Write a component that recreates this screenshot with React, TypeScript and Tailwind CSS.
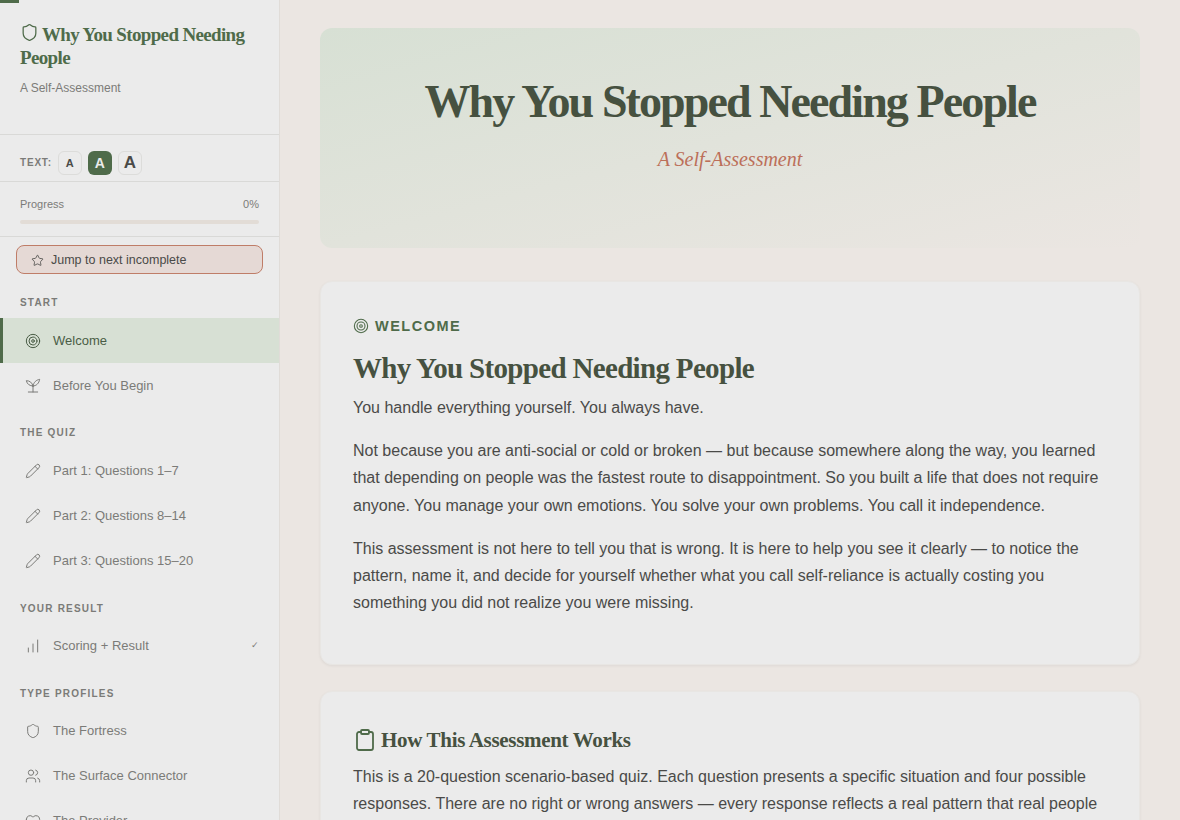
import { ChartNoAxesColumnIncreasing, Clipboard, Heart, Pencil, Shield, Star, Target, Users } from "lucide-react";
import type { ComponentType } from "react";

const sans = "font-['Liberation_Sans',Arial,sans-serif]";
const serif = "font-['Liberation_Serif','Times_New_Roman',serif]";

type IconProps = { size?: number; strokeWidth?: number; className?: string };

type NavItem = {
  label: string;
  icon: ComponentType<IconProps>;
  active?: boolean;
  done?: boolean;
};

// two-leaf seedling on a base line, lucide's sprout is too narrow for this one
function Seedling({ size = 16, strokeWidth = 1.5 }: IconProps) {
  return (
    <svg width={size} height={size} viewBox="0 0 24 24" fill="none" stroke="currentColor" strokeWidth={strokeWidth} strokeLinecap="round" strokeLinejoin="round">
      <path d="M5 21h14" />
      <path d="M12 21v-9" />
      <path d="M12 12C7 12 3 9 2 4c5 0 9 3 10 8z" />
      <path d="M12 12c5 0 9-4 10-10-5 1-9 4-10 10z" />
    </svg>
  );
}

const NAV: { title: string; titleClass: string; items: NavItem[] }[] = [
  {
    title: "Start",
    titleClass: "mb-[7px]",
    items: [
      { label: "Welcome", icon: Target, active: true },
      { label: "Before You Begin", icon: Seedling },
    ],
  },
  {
    title: "The Quiz",
    titleClass: "mb-[7px]",
    items: [
      { label: "Part 1: Questions 1–7", icon: Pencil },
      { label: "Part 2: Questions 8–14", icon: Pencil },
      { label: "Part 3: Questions 15–20", icon: Pencil },
    ],
  },
  {
    title: "Your Result",
    titleClass: "pt-px mb-[6px]",
    items: [{ label: "Scoring + Result", icon: ChartNoAxesColumnIncreasing, done: true }],
  },
  {
    title: "Type Profiles",
    titleClass: "pt-px mb-[6px]",
    items: [
      { label: "The Fortress", icon: Shield },
      { label: "The Surface Connector", icon: Users },
      { label: "The Provider", icon: Heart },
    ],
  },
];

function Sidebar() {
  return (
    <aside className="w-[280px] h-[820px] shrink-0 overflow-hidden bg-[#ebebeb] border-r border-r-[#e0dcd8] relative">
      {/* reading progress */}
      <div className="absolute left-0 top-0 h-[3px] w-[19px] bg-[#4f6b4a]" />

      <div className="h-[135px] px-5 pt-[23px] border-b border-[#d9d9d7]">
        <h1 className={`${serif} text-[19px] leading-[23px] font-bold text-[#4f6b4a] tracking-[-0.65px]`}>
          <Shield size={19} strokeWidth={1.6} className="inline-block mr-[3px] align-[-2px] relative top-[-1px]" />
          Why You Stopped Needing People
        </h1>
        <p className="mt-[11px] text-[12px] leading-[16px] text-[#7b7b78]">A Self-Assessment</p>
      </div>

      <div className="h-[47px] px-5 pt-[16px] flex items-start gap-[6px] border-b border-[#d9d9d7]">
        <span className="text-[10px] leading-6 font-bold tracking-[0.8px] text-[#7b7b78]">TEXT:</span>
        <button className="w-6 h-6 rounded-md border border-[#dcdcda] text-[11px] font-bold text-[#4a4a48] flex items-center justify-center">A</button>
        <button className="w-6 h-6 rounded-md bg-[#4f6b4a] text-[14px] font-bold text-[#ebebeb] flex items-center justify-center">A</button>
        <button className="w-6 h-6 rounded-md border border-[#dcdcda] text-[17px] font-bold text-[#4a4a48] flex items-center justify-center">A</button>
      </div>

      <div className="h-[55px] px-5 pt-[15px] border-b border-[#d9d9d7]">
        <div className="flex justify-between text-[11px] leading-[14px] text-[#7b7b78]">
          <span>Progress</span>
          <span>0%</span>
        </div>
        <div className="mt-[9px] h-1 rounded-full bg-[#e2dcd6]" />
      </div>

      <div className="px-4 pt-2">
        <button className="w-[247px] h-[29px] rounded-lg border border-[#bf7d68] bg-[#e5d9d5] pl-[14px] pt-px flex items-center gap-[7px] text-[12.5px] text-[#4a4a48]">
          <Star size={13} strokeWidth={1.5} />
          Jump to next incomplete
        </button>
      </div>

      <nav className="pt-[21px]">
        {NAV.map((group) => (
          <div key={group.title} className="mb-[17px]">
            <div className={`px-5 text-[10px] leading-[16px] font-bold uppercase tracking-[1.2px] text-[#7b7b78] ${group.titleClass}`}>{group.title}</div>
            {group.items.map((item) => {
              const Icon = item.icon;
              return (
                <div
                  key={item.label}
                  className={
                    item.active
                      ? "h-[45px] pl-[22px] pr-5 flex items-center gap-[12px] text-[13px] bg-[#d7e0d4] text-[#4a5d46] border-l-[3px] border-l-[#4f6b4a]"
                      : "h-[45px] pl-[25px] pr-5 flex items-center gap-[12px] text-[13px] text-[#7b7b78]"
                  }
                >
                  <Icon size={16} strokeWidth={1.5} />
                  <span className="flex-1">{item.label}</span>
                  {item.done && <span className="text-[9px] text-[#7b7b78]">✓</span>}
                </div>
              );
            })}
          </div>
        ))}
      </nav>
    </aside>
  );
}

export default function App() {
  return (
    <div className={`${sans} w-[1180px] h-[820px] overflow-hidden flex bg-[#ebe6e2]`}>
      <Sidebar />
      <main className="flex-1 h-[820px] overflow-hidden px-10 pt-7">
        <section className="h-[220px] rounded-xl bg-gradient-to-br from-[#d7e0d4] to-[#ebe6e2] text-center pt-[46px]">
          <h1 className={`${serif} text-[46px] leading-[56px] font-bold text-[#465140] tracking-[-1.9px]`}>Why You Stopped Needing People</h1>
          <p className={`${serif} mt-[17px] text-[20px] leading-[24px] italic text-[#bc6f59]`}>A Self-Assessment</p>
        </section>

        <section className="mt-[33px] h-[384px] rounded-xl border border-[#e8e6e3] bg-[#ebebeb] shadow-[0_1px_3px_rgba(0,0,0,0.06)] px-8 pt-[35px]">
          <div className="flex items-center gap-[6px] text-[14.5px] leading-[18px] font-bold tracking-[1.5px] text-[#4f6b4a]">
            <Target size={16} strokeWidth={1.6} />
            WELCOME
          </div>
          <h2 className={`${serif} mt-[15px] text-[29px] leading-[36px] font-bold text-[#465140] tracking-[-0.67px]`}>Why You Stopped Needing People</h2>
          <div className="mt-[8px] text-[16px] leading-[27.2px] text-[#4a4a48]">
            <p>You handle everything yourself. You always have.</p>
            <p className="mt-4">
              Not because you are anti-social or cold or broken — but because somewhere along the way, you learned that depending on people was the fastest route to disappointment. So you built a life that does not require anyone. You manage your own emotions. You solve your own problems. You call it independence.
            </p>
            <p className="mt-4">
              This assessment is not here to tell you that is wrong. It is here to help you see it clearly — to notice the pattern, name it, and decide for yourself whether what you call self-reliance is actually costing you something you did not realize you were missing.
            </p>
          </div>
        </section>

        <section className="mt-[26px] rounded-xl border border-[#e8e6e3] bg-[#ebebeb] shadow-[0_1px_3px_rgba(0,0,0,0.06)] px-8 pt-[34px] pb-8">
          <h3 className={`${serif} flex items-center gap-[4px] text-[21px] leading-[28px] font-bold text-[#465140] tracking-[-0.32px]`}>
            <Clipboard size={24} strokeWidth={1.8} className="text-[#4f6b4a]" />
            How This Assessment Works
          </h3>
          <p className="mt-[9px] text-[16px] leading-[27.2px] text-[#4a4a48]">
            This is a 20-question scenario-based quiz. Each question presents a specific situation and four possible responses. There are no right or wrong answers — every response reflects a real pattern that real people use.
          </p>
        </section>
      </main>
    </div>
  );
}
